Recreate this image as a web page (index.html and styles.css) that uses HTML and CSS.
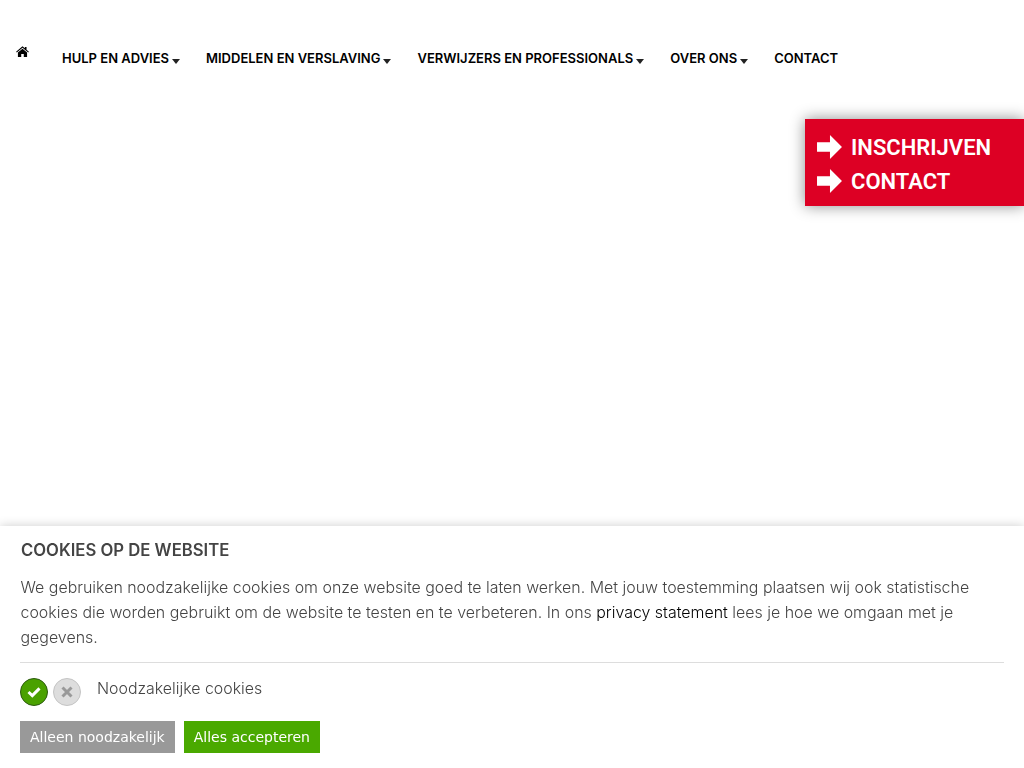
FILE: index.html
```html
<!DOCTYPE html>
<html lang="nl">

<head>
    <meta charset="UTF-8">
    <meta name="viewport" content="width=device-width, initial-scale=1.0">
    <title>Cookies op de website</title>
    <link rel="stylesheet" href="styles.css">
</head>

<body>
    <nav class="menu">
        <a class="home" href="#" aria-label="Home">
            <svg viewBox="0 0 14 12" width="13" height="11">
                <path d="M7 0.2 L9.6 2.5 V1 H11.4 V4.1 L14 6.4 L13.2 7.2 L7 1.9 L0.8 7.2 L0 6.4 Z" />
                <path d="M7 3 L12 7.2 V12 H8.4 V8.6 H5.6 V12 H2 V7.2 Z" />
            </svg>
        </a>
        <a href="#">HULP EN ADVIES<span class="caret"></span></a>
        <a href="#">MIDDELEN EN VERSLAVING<span class="caret"></span></a>
        <a href="#">VERWIJZERS EN PROFESSIONALS<span class="caret"></span></a>
        <a href="#">OVER ONS<span class="caret"></span></a>
        <a href="#">CONTACT</a>
    </nav>

    <div class="quick-links">
        <a href="#">
            <svg viewBox="0 0 26 25" width="25" height="24"><path d="M0 7.5 H13.5 V0 L26 12.5 L13.5 25 V17.5 H0 Z" /></svg>
            INSCHRIJVEN
        </a>
        <a href="#">
            <svg viewBox="0 0 26 25" width="25" height="24"><path d="M0 7.5 H13.5 V0 L26 12.5 L13.5 25 V17.5 H0 Z" /></svg>
            CONTACT
        </a>
    </div>

    <section class="cookies">
        <h2>COOKIES OP DE WEBSITE</h2>
        <p>We gebruiken noodzakelijke cookies om onze website goed te laten werken. Met jouw toestemming plaatsen wij ook statistische cookies die worden gebruikt om de website te testen en te verbeteren. In ons <a href="#">privacy statement</a> lees je hoe we omgaan met je gegevens.</p>
        <div class="cookie-row">
            <span class="toggle on">
                <svg viewBox="0 0 14 12" width="14" height="12"><path d="M1.5 6 L5.3 9.6 L12.5 2.4" /></svg>
            </span>
            <span class="toggle off">
                <svg viewBox="0 0 12 12" width="12" height="12"><path d="M1.5 1.5 L10.5 10.5 M10.5 1.5 L1.5 10.5" /></svg>
            </span>
            <span class="cookie-label">Noodzakelijke cookies</span>
        </div>
        <div class="cookie-buttons">
            <button class="btn-grey" type="button">Alleen noodzakelijk</button>
            <button class="btn-green" type="button">Alles accepteren</button>
        </div>
    </section>
</body>

</html>
```

FILE: styles.css
```css
html,
body {
    height: 100%;
}

body {
    font-family: Inter, "Liberation Sans", sans-serif;
    background-color: #fff;
    margin: 0;
    padding: 0;
    overflow: hidden;
}

.menu {
    display: flex;
    align-items: flex-start;
    padding: 50px 0 0 16px;
}

.menu a {
    color: #000;
    font-size: 13px;
    font-weight: 600;
    line-height: 17px;
    text-decoration: none;
    margin-right: 26px;
    white-space: nowrap;
}

.menu .home {
    display: block;
    line-height: 0;
    margin: -4px 33px 0 0;
}

.home svg {
    fill: #000;
}

.caret {
    display: inline-block;
    width: 0;
    height: 0;
    margin-left: 3px;
    border-top: 5px solid #222;
    border-left: 4px solid transparent;
    border-right: 4px solid transparent;
    vertical-align: -1px;
}

.quick-links {
    position: absolute;
    top: 119px;
    right: 0;
    width: 219px;
    height: 87px;
    padding: 11px 0 0 12px;
    box-sizing: border-box;
    background-color: #dd0024;
    box-shadow: 0 0 14px rgba(0, 0, 0, 0.45);
}

.quick-links a {
    display: flex;
    align-items: center;
    gap: 9px;
    height: 34px;
    color: #fff;
    font-family: Roboto, "Liberation Sans", sans-serif;
    font-size: 22px;
    font-weight: 600;
    text-decoration: none;
}

.quick-links svg {
    fill: #fff;
}

.cookies {
    position: fixed;
    left: 0;
    right: 0;
    bottom: 0;
    height: 242px;
    box-sizing: border-box;
    padding: 14px 20px 0;
    background-color: #fff;
    box-shadow: 0 0 10px rgba(0, 0, 0, 0.2);
    color: #444;
}

.cookies h2 {
    margin: 0 0 0 1px;
    font-size: 16.7px;
    font-weight: 600;
    line-height: 21px;
}

.cookies p {
    margin: 14px 0 0;
    padding: 0 0 12px 0.5px;
    border-bottom: 1px solid #ddd;
    font-size: 15.94px;
    font-weight: 300;
    line-height: 25px;
}

.cookies p a {
    color: #000;
    text-decoration: none;
}

.cookie-row {
    display: flex;
    align-items: flex-start;
    gap: 5px;
    margin-top: 15px;
}

.toggle {
    display: flex;
    align-items: center;
    justify-content: center;
    width: 28px;
    height: 28px;
    box-sizing: border-box;
    border-radius: 50%;
}

.toggle svg {
    fill: none;
    stroke-width: 3;
}

.toggle.on {
    background-color: #4aa100;
    border: 1px solid #2d5a10;
}

.toggle.on svg {
    stroke: #fff;
}

.toggle.off {
    background-color: #ddd;
    border: 1px solid #c4c4c4;
}

.toggle.off svg {
    stroke: #999;
}

.cookie-label {
    margin: 1px 0 0 11px;
    font-size: 15.9px;
    font-weight: 300;
    line-height: 20px;
}

.cookie-buttons {
    display: flex;
    gap: 9px;
    margin-top: 15px;
}

.cookie-buttons button {
    height: 32px;
    padding: 0 10px;
    border: none;
    color: #fff;
    font-family: "DejaVu Sans", sans-serif;
    font-size: 14px;
}

.btn-grey {
    background-color: #999;
}

.btn-green {
    background-color: #4aa900;
}
```
